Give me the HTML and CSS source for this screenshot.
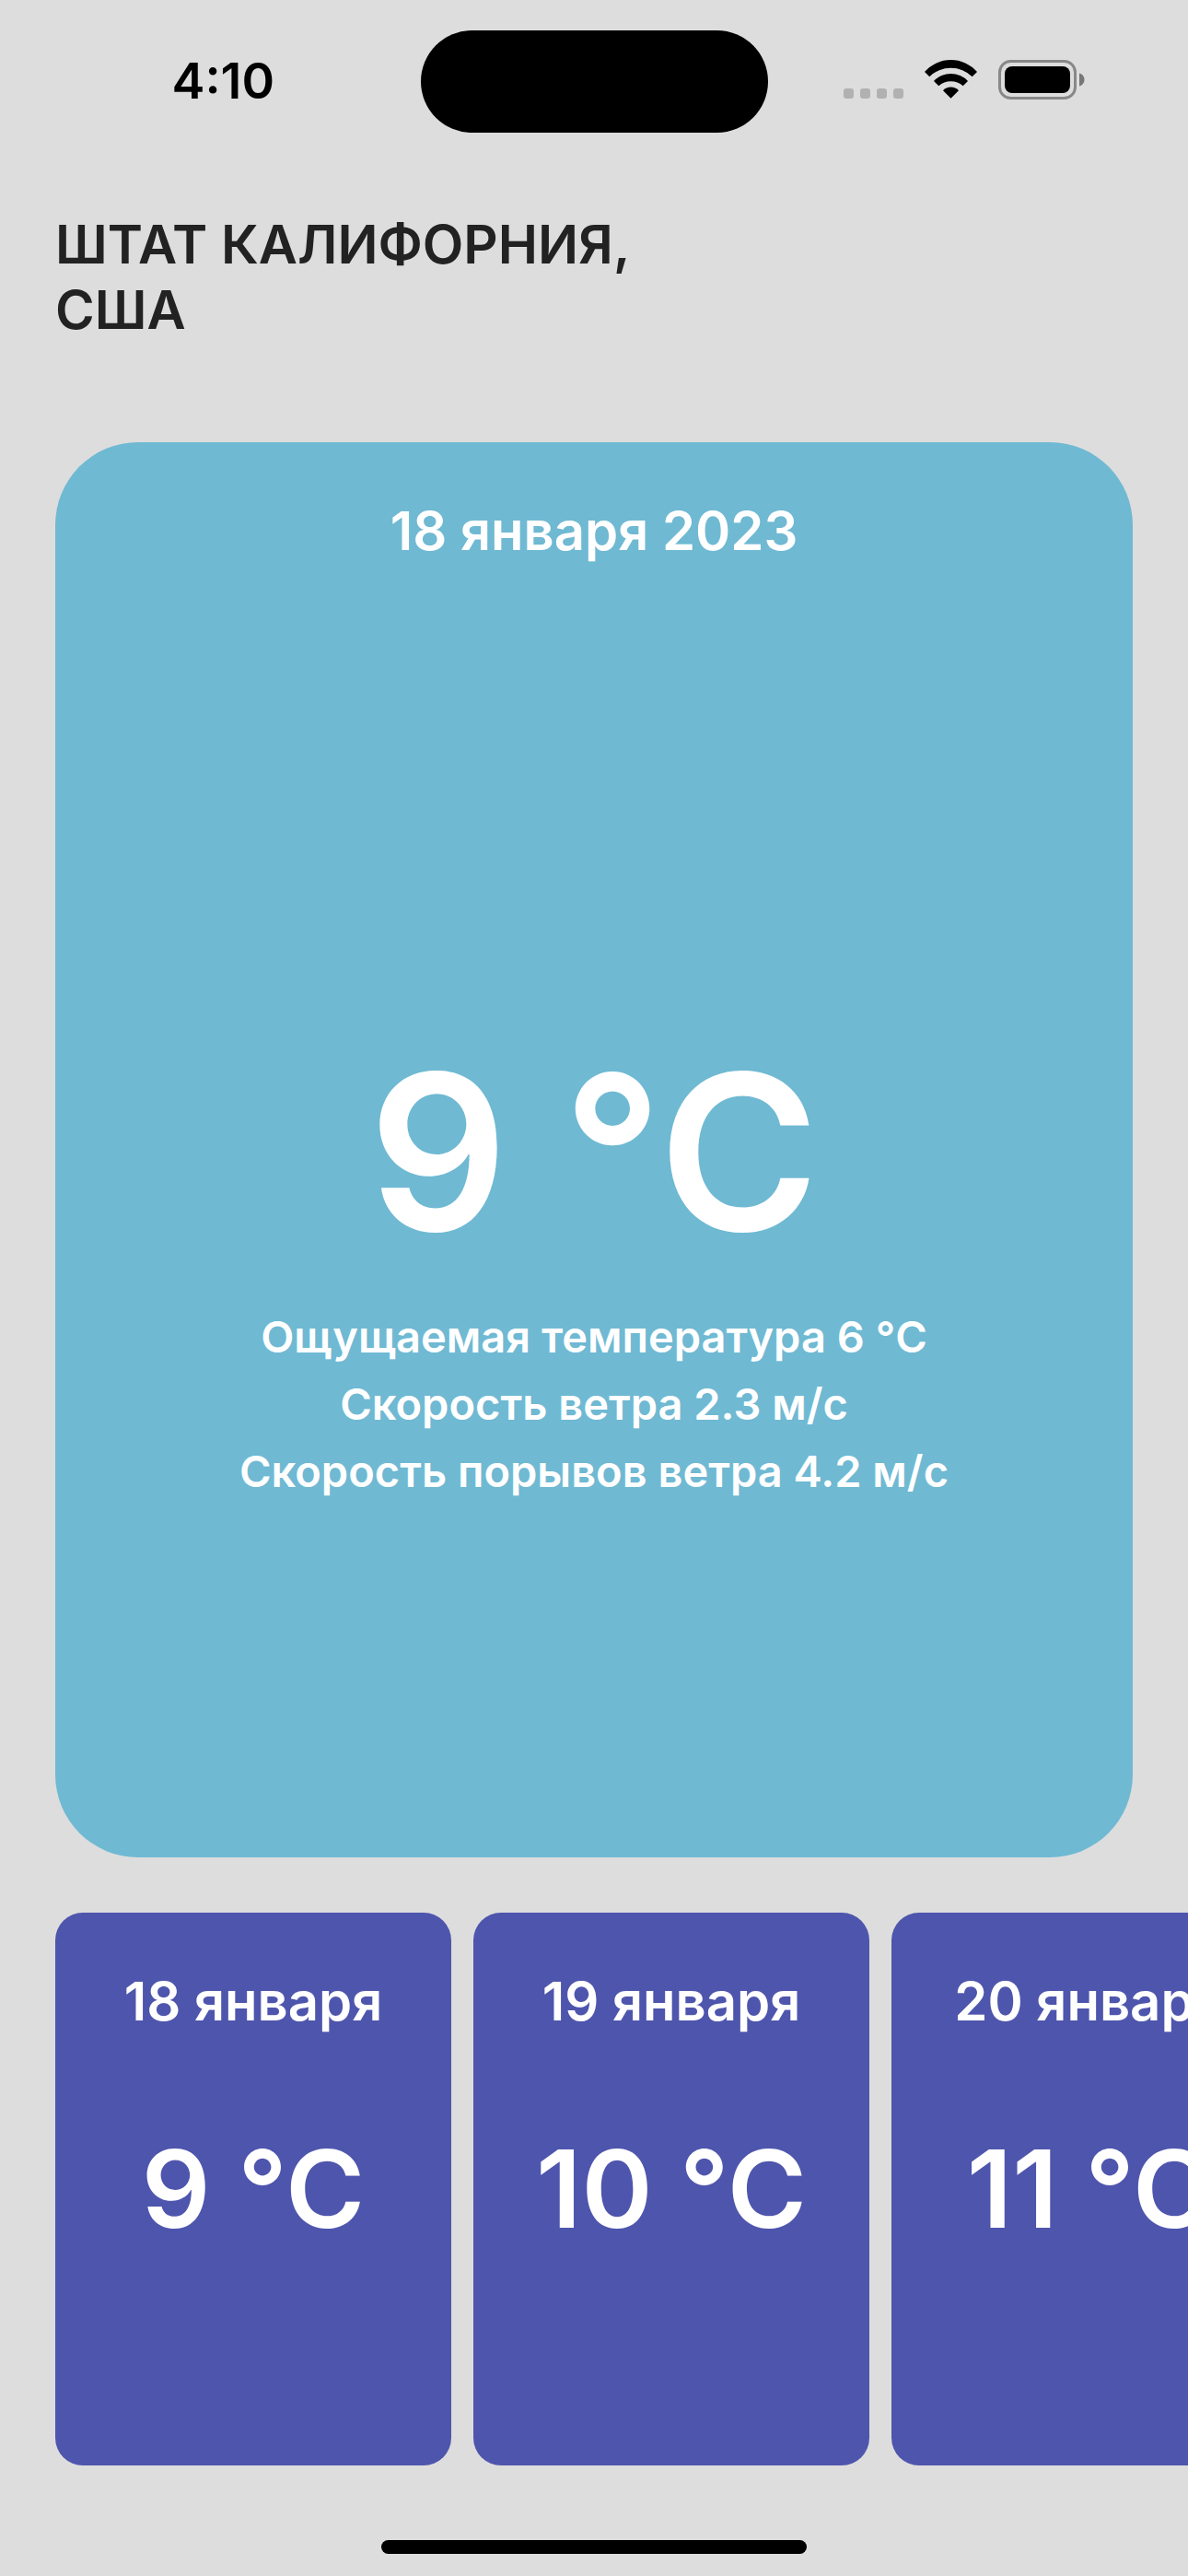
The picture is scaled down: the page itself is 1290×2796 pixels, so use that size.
FILE: index.html
```html
<!DOCTYPE html>
<html lang="ru">
<head>
  <meta charset="utf-8">
  <meta name="viewport" content="width=device-width, initial-scale=1">
  <title>Погода</title>
  <link rel="stylesheet" href="styles.css">
</head>
<body>
  <div class="screen">
    <div class="status-bar">
      <time class="clock">4:10</time>
      <div class="island"></div>
      <div class="status-icons">
        <svg width="262" height="44" viewBox="0 0 262 44" aria-hidden="true">
          <g fill="#b1b1b1">
            <rect x="0" y="32" width="11" height="11" rx="3"/>
            <rect x="18" y="32" width="11" height="11" rx="3"/>
            <rect x="36" y="32" width="11" height="11" rx="3"/>
            <rect x="54" y="32" width="11" height="11" rx="3"/>
          </g>
          <g transform="translate(116.5 1)">
            <path d="M-28.5 13A37.7 37.7 0 0 1 28.5 13L23.2 18.3A33 33 0 0 0 -23.2 18.3Z"/>
            <path d="M-18.5 23A25.4 25.4 0 0 1 18.5 23L13.2 28.3A20 20 0 0 0 -13.2 28.3Z"/>
            <path d="M-8.5 33.3A11.5 11.5 0 0 1 8.5 33.3L0 41.8Z"/>
          </g>
          <rect x="169.500" y="2.500" width="82" height="40" rx="12" fill="none" stroke="#888" stroke-width="3"/>
          <rect x="175" y="8" width="71" height="29" rx="8"/>
          <path d="M256 15.500C259.500 16.500 261.500 19.500 261.500 22.500S259.500 28.500 256 29.500Z" fill="#777"/>
        </svg>
      </div>
    </div>

    <main class="weather">
      <h1 class="place">ШТАТ КАЛИФОРНИЯ, США</h1>

      <section class="today">
        <h2 class="date">18 января 2023</h2>
        <div class="readings">
          <p class="today-temp">9 °C</p>
          <ul class="details">
            <li>Ощущаемая температура 6 °C</li>
            <li>Скорость ветра 2.3 м/с</li>
            <li>Скорость порывов ветра 4.2 м/с</li>
          </ul>
        </div>
      </section>

      <section class="forecast">
        <article class="day">
          <h2 class="date">18 января</h2>
          <p class="day-temp">9 °C</p>
        </article>
        <article class="day">
          <h2 class="date">19 января</h2>
          <p class="day-temp">10 °C</p>
        </article>
        <article class="day">
          <h2 class="date">20 января</h2>
          <p class="day-temp">11 °C</p>
        </article>
      </section>
    </main>

    <div class="home-indicator"></div>
  </div>
</body>
</html>
```
FILE: styles.css
```css
* {
  box-sizing: border-box;
  margin: 0;
  padding: 0;
}

body {
  background: #ddd;
  color: #000;
  font-family: Inter, "Liberation Sans", sans-serif;
  font-weight: 600;
}

.screen {
  display: flex;
  flex-direction: column;
  min-height: 100vh;
}

.status-bar {
  display: grid;
  grid-template-columns: 1fr 377px 1fr;
  align-items: center;
  padding-top: 33px;
}

.clock {
  padding: 0 0 2px 28px;
  font-size: 54px;
  line-height: 60px;
  text-align: center;
}

.island {
  height: 111px;
  border-radius: 56px;
  background: #000;
}

.status-icons {
  display: flex;
  justify-content: center;
  padding: 0 30px 6px 0;
}

.weather {
  display: flex;
  flex: 1;
  flex-direction: column;
  padding-top: 86px;
}

.place {
  max-width: 760px;
  margin: 0 60px 108px;
  color: #222;
  font-size: 58px;
  font-weight: 600;
  line-height: 71px;
}

.today {
  display: flex;
  flex: 1;
  flex-direction: column;
  margin: 0 60px 60px;
  padding-top: 60px;
  border-radius: 90px;
  background: #6fb9d3;
  color: #fff;
  text-align: center;
}

.date {
  font-size: 58px;
  font-weight: 600;
  line-height: 72px;
}

.readings {
  display: flex;
  flex: 1;
  flex-direction: column;
  justify-content: center;
  padding-top: 114px;
}

.today-temp {
  font-size: 236px;
  line-height: 280px;
}

.details {
  padding-top: 24px;
  font-size: 47px;
  line-height: 73px;
  list-style: none;
}

.forecast {
  display: flex;
  gap: 24px;
  padding: 0 60px;
  overflow: hidden;
}

.day {
  flex: 0 0 430px;
  min-height: 600px;
  padding-top: 60px;
  border-radius: 30px;
  background: #4e55ad;
  color: #fff;
  text-align: center;
}

.day-temp {
  padding-top: 98px;
  font-size: 117px;
  line-height: 140px;
}

.home-indicator {
  align-self: center;
  width: 462px;
  height: 15px;
  margin: 81px 0 24px;
  border-radius: 8px;
  background: #000;
}
```
